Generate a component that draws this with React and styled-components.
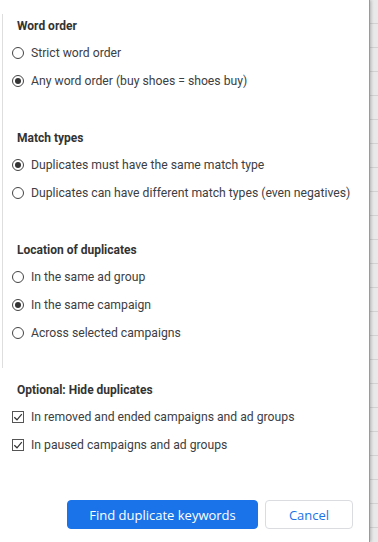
import React, { useState } from "react";
import styled, { createGlobalStyle } from "styled-components";

const GlobalStyle = createGlobalStyle`
  html, body {
    margin: 0;
    padding: 0;
    background: #e8e8e8;
  }
  body {
    font-family: Roboto, "Liberation Sans", Arial, sans-serif;
  }
`;

/**
 * UI
 */
const Page = styled.div`
  display: flex;
  height: 542px;
  overflow: hidden;
`;

const Panel = styled.div`
  width: 369px;
  flex-shrink: 0;
  background: #fff;
  border-right: 1px solid #9a9a9a;
  box-shadow: 1px 0 3px rgba(0, 0, 0, 0.25);
  display: flex;
  flex-direction: column;
  position: relative;
  z-index: 1;
`;

const Sheet = styled.div`
  flex: 1;
  background-color: #e9e9e9;
  background-image: repeating-linear-gradient(
    to bottom,
    transparent 0px,
    transparent 23px,
    #d2d2d2 23px,
    #d2d2d2 24px
  );
`;

const Group = styled.div`
  margin: 14px 0 0 2px;
  border-left: 1px solid #dedede;
  padding: 2px 0 21px 0;
`;

const Section = styled.div`
  padding-left: ${props => (props.flush ? "17px" : "14px")};
  margin-bottom: ${props => (props.last ? "0" : "33px")};
  margin-top: ${props => props.top || "0"};
`;

const Heading = styled.div`
  font-size: 12px;
  font-weight: 700;
  line-height: 20px;
  color: #333;
  margin-bottom: 3px;
`;

const Option = styled.label`
  display: flex;
  align-items: center;
  gap: 7px;
  height: 28px;
  margin-left: -5px;
  font-size: 12.2px;
  color: #3c4043;
  white-space: nowrap;
  cursor: pointer;
`;

const Radio = styled.span`
  width: 12px;
  height: 12px;
  box-sizing: border-box;
  border-radius: 50%;
  border: 1.3px solid #444;
  display: flex;
  align-items: center;
  justify-content: center;
  flex-shrink: 0;

  &::after {
    content: "";
    width: 6px;
    height: 6px;
    border-radius: 50%;
    background: #333;
    display: ${props => (props.checked ? "block" : "none")};
  }
`;

const Box = styled.span`
  width: 12px;
  height: 12px;
  box-sizing: border-box;
  border: 1px solid #555;
  display: flex;
  align-items: center;
  justify-content: center;
  flex-shrink: 0;
`;

const Footer = styled.div`
  margin-top: auto;
  display: flex;
  justify-content: flex-end;
  gap: 7px;
  padding: 0 16px 13px 0;
`;

const Button = styled.button`
  height: 29px;
  box-sizing: border-box;
  border-radius: 4px;
  font-family: "Open Sans", Roboto, sans-serif;
  font-size: 13px;
  font-weight: 500;
  cursor: pointer;
  border: 1px solid ${props => (props.primary ? "#1a73e8" : "#dadce0")};
  background: ${props => (props.primary ? "#1a73e8" : "#fff")};
  color: ${props => (props.primary ? "#fff" : "#1a73e8")};
  width: ${props => props.width};
  padding: 0;
`;

const Check = () => (
  <svg width="10" height="10" viewBox="0 0 10 10">
    <path d="M1.3 5.2 L4 7.8 L8.8 2.2" fill="none" stroke="#333" strokeWidth="1.2" />
  </svg>
);

const RadioGroup = ({ title, options, value, onChange, last }) => (
  <Section last={last}>
    <Heading>{title}</Heading>
    {options.map((o, i) => (
      <Option key={i} onClick={() => onChange(i)}>
        <Radio checked={value === i} />
        {o}
      </Option>
    ))}
  </Section>
);

/**
 * Component
 */
export default function App() {
  const [order, setOrder] = useState(1);
  const [match, setMatch] = useState(0);
  const [location, setLocation] = useState(1);
  const [hide, setHide] = useState([true, true]);

  const toggle = i => setHide(h => h.map((v, j) => (j === i ? !v : v)));

  return (
    <>
      <GlobalStyle />
      <Page>
        <Panel>
          <Group>
            <RadioGroup
              title="Word order"
              value={order}
              onChange={setOrder}
              options={[
                "Strict word order",
                "Any word order (buy shoes = shoes buy)",
              ]}
            />
            <RadioGroup
              title="Match types"
              value={match}
              onChange={setMatch}
              options={[
                "Duplicates must have the same match type",
                "Duplicates can have different match types (even negatives)",
              ]}
            />
            <RadioGroup
              title="Location of duplicates"
              value={location}
              onChange={setLocation}
              last
              options={[
                "In the same ad group",
                "In the same campaign",
                "Across selected campaigns",
              ]}
            />
          </Group>
          <Section flush last top="12px">
            <Heading>Optional: Hide duplicates</Heading>
            {[
              "In removed and ended campaigns and ad groups",
              "In paused campaigns and ad groups",
            ].map((label, i) => (
              <Option key={i} onClick={() => toggle(i)}>
                <Box>{hide[i] && <Check />}</Box>
                {label}
              </Option>
            ))}
          </Section>
          <Footer>
            <Button primary width="191px">
              Find duplicate keywords
            </Button>
            <Button width="88px">Cancel</Button>
          </Footer>
        </Panel>
        <Sheet />
      </Page>
    </>
  );
}
